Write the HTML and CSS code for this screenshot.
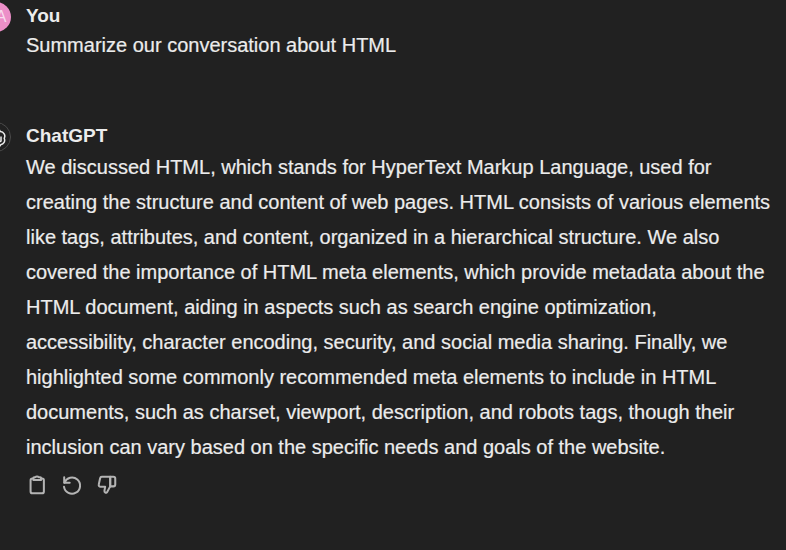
FILE: index.html
```html
<!DOCTYPE html>
<html lang="en">
<head>
<meta charset="UTF-8">
<title>ChatGPT</title>
<link rel="stylesheet" href="styles.css">
</head>
<body>
<div class="turn turn-user">
  <div class="avatar avatar-user">A</div>
  <div class="content">
    <div class="author">You</div>
    <div class="message">Summarize our conversation about HTML</div>
  </div>
</div>
<div class="turn turn-bot">
  <div class="avatar avatar-bot">
    <svg viewBox="0 0 24 24" width="24" height="24" fill="none" stroke="#ececec" stroke-width="1.5" stroke-linejoin="round">
      <path d="M12 3.500a4.500 4.500 0 0 1 4.300 3.100 4.500 4.500 0 0 1 3.900 6.700 4.500 4.500 0 0 1-3.500 6.400 4.500 4.500 0 0 1-7.700 1 4.500 4.500 0 0 1-5.200-6 4.500 4.500 0 0 1 .8-7.300A4.500 4.500 0 0 1 12 3.500z"/>
      <path d="M9 7.500v7l4 2.300M15 9l-4-2.300M17 11.500v4.500l-4 2.300"/>
    </svg>
  </div>
  <div class="content">
    <div class="author">ChatGPT</div>
    <div class="message answer">
      <div>We discussed HTML, which stands for HyperText Markup Language, used for</div>
      <div>creating the structure and content of web pages. HTML consists of various elements</div>
      <div>like tags, attributes, and content, organized in a hierarchical structure. We also</div>
      <div>covered the importance of HTML meta elements, which provide metadata about the</div>
      <div>HTML document, aiding in aspects such as search engine optimization,</div>
      <div>accessibility, character encoding, security, and social media sharing. Finally, we</div>
      <div>highlighted some commonly recommended meta elements to include in HTML</div>
      <div>documents, such as charset, viewport, description, and robots tags, though their</div>
      <div>inclusion can vary based on the specific needs and goals of the website.</div>
    </div>
    <div class="actions">
      <svg class="icon" viewBox="0 0 24 24"><path d="M8 5H7a2 2 0 0 0-2 2v12a2 2 0 0 0 2 2h10.500a2 2 0 0 0 2-2V7a2 2 0 0 0-2-2h-1"/><path d="M8 6.500V4.500a1 1 0 0 1 1-1h1.200a2 1.500 0 0 1 3.600 0H15.500a1 1 0 0 1 1 1v2z"/></svg>
      <svg class="icon" viewBox="0 0 24 24"><path d="M3.500 3.500v6h6"/><path d="M3.800 9.500A8.800 8.800 0 1 1 3.300 14"/></svg>
      <svg class="icon" viewBox="0 0 24 24"><path d="M15.500 3H6.500a2 2 0 0 0-2 1.600L3 11.500A2 2 0 0 0 5 14h5l-.8 4.200c-.3 1.700 2 3.300 3 1.500l3.300-6.200z"/><path d="M15.500 3h3.500a2 2 0 0 1 2 2v6.500a2 2 0 0 1-2 2h-3.500z"/></svg>
    </div>
  </div>
</div>
</body>
</html>
```

FILE: styles.css
```css
body {
  margin: 0;
  height: 550px;
  overflow: hidden;
  background-color: #212121;
  color: #ececec;
  font-family: "Liberation Sans", Inter, sans-serif;
  font-size: 20px;
}
.turn {
  display: flex;
  align-items: flex-start;
  gap: 15px;
}
.turn-user {
  padding-top: 4px;
}
.turn-bot {
  margin-top: 61px;
}
.avatar {
  flex: none;
  width: 30px;
  height: 30px;
  margin-left: -19px;
  border-radius: 50%;
  display: flex;
  align-items: center;
  justify-content: center;
  box-sizing: border-box;
}
.avatar-user {
  margin-top: -2px;
  padding-left: 10px;
  background-color: #ec8fc8;
  color: #f8dcee;
  font-size: 16px;
}
.avatar-bot {
  margin-top: -2px;
  border: 1px solid #4a4a4a;
}
.content {
  flex: 1;
  min-width: 0;
}
.author {
  font-weight: 700;
  line-height: 24px;
  font-size: 19px;
}
.message {
  line-height: 35px;
  white-space: nowrap;
  -webkit-text-stroke: 0.2px #ececec;
}
.answer {
  margin-top: 2px;
}
.actions {
  display: flex;
  gap: 13px;
  margin-top: 9px;
}
.icon {
  width: 22px;
  height: 22px;
  fill: none;
  stroke: #b4b4b4;
  stroke-width: 2.2;
  stroke-linecap: round;
  stroke-linejoin: round;
}
```
